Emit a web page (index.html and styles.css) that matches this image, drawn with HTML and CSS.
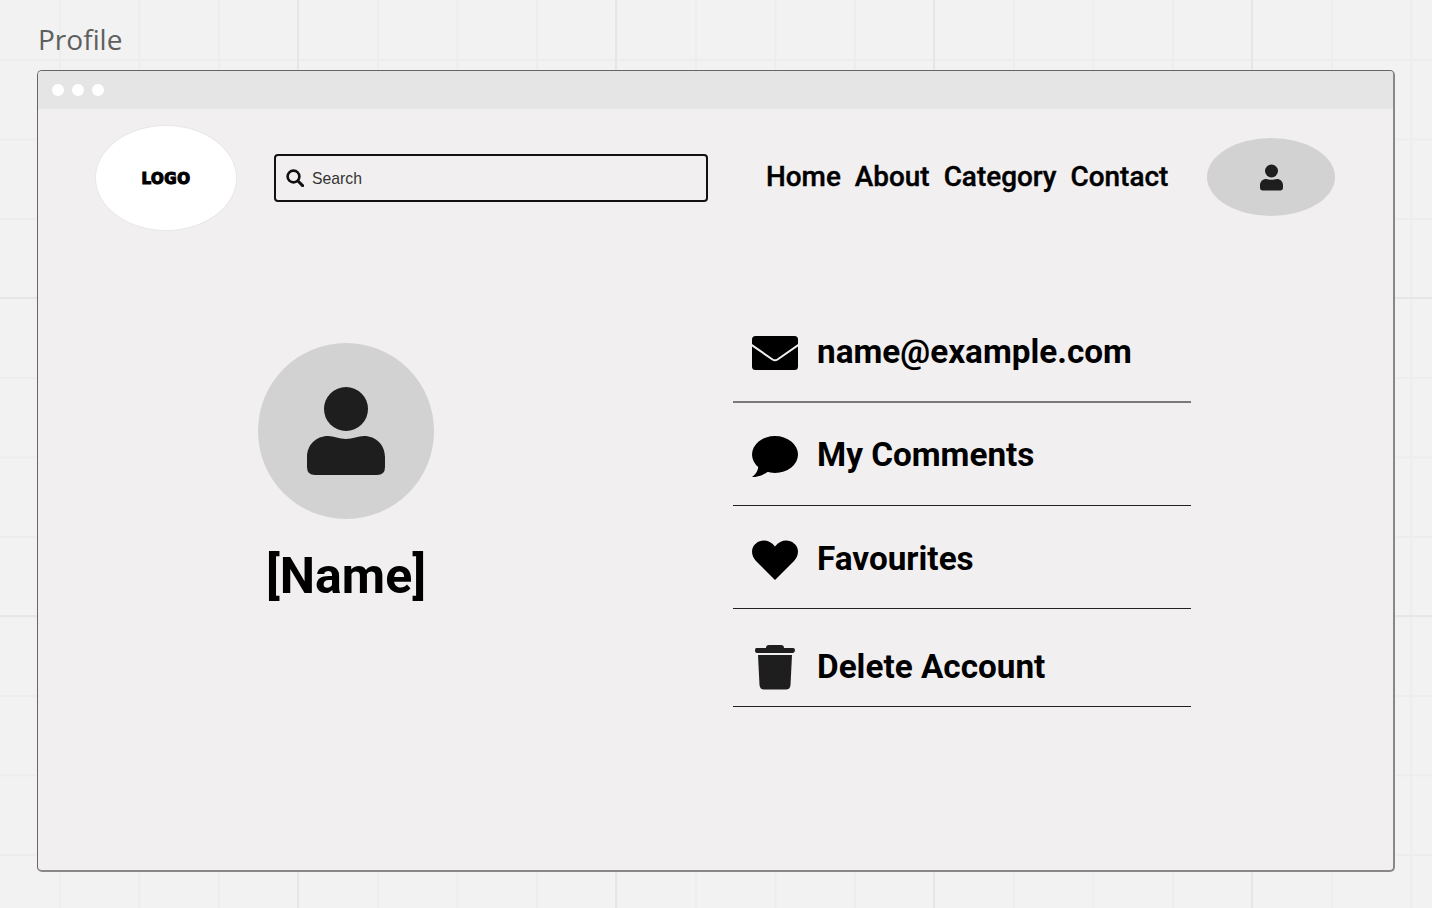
FILE: index.html
```html
<!DOCTYPE html>
<html lang="en">
<head>
  <meta charset="UTF-8" />
  <meta name="viewport" content="width=device-width, initial-scale=1.0"/>
  <title>Profile</title>
  <link rel="stylesheet" href="styles.css">
</head>
<body>
  <h1 class="frame-title">Profile</h1>

  <div class="window">
    <div class="titlebar">
      <span class="dot"></span>
      <span class="dot"></span>
      <span class="dot"></span>
    </div>

    <header class="site-header">
      <div class="logo">LOGO</div>

      <div class="search">
        <svg class="search-icon" viewBox="0 0 18 18" width="18" height="18">
          <circle cx="7.5" cy="7.5" r="5.9" fill="none" stroke="#111" stroke-width="2.6"/>
          <path d="M12 12l4.600 4.600" fill="none" stroke="#111" stroke-width="3" stroke-linecap="round"/>
        </svg>
        <span class="search-text">Search</span>
      </div>

      <nav class="nav">
        <a href="#">Home</a>
        <a href="#">About</a>
        <a href="#">Category</a>
        <a href="#">Contact</a>
      </nav>

      <div class="user-btn">
        <svg viewBox="0 0 78 88" width="23" height="27">
          <circle cx="39" cy="22" r="22"/>
          <path d="M0 80V70C0 58 9 49 21 49C27 49 32 52 39 52C46 52 51 49 57 49C69 49 78 58 78 70V80Q78 88 70 88H8Q0 88 0 80Z"/>
        </svg>
      </div>
    </header>

    <main class="profile">
      <section class="profile-card">
        <div class="avatar">
          <svg viewBox="0 0 78 88" width="78" height="88">
            <circle cx="39" cy="22" r="22"/>
            <path d="M0 80V70C0 58 9 49 21 49C27 49 32 52 39 52C46 52 51 49 57 49C69 49 78 58 78 70V80Q78 88 70 88H8Q0 88 0 80Z"/>
          </svg>
        </div>
        <h2 class="profile-name">[Name]</h2>
      </section>

      <ul class="profile-list">
        <li class="row row-email">
          <svg class="row-icon" viewBox="0 0 46 34" width="46" height="34">
            <rect width="46" height="34" rx="3.500" fill="#000"/>
            <path d="M-1 8.500L20.500 23.500Q23 25 25.500 23.500L47 8.500" fill="none" stroke="#f1eff0" stroke-width="2"/>
          </svg>
          <span>name@example.com</span>
        </li>
        <li class="row">
          <svg class="row-icon" viewBox="0 0 46 41" width="46" height="41">
            <ellipse cx="23" cy="18.500" rx="23" ry="18.500" fill="#000"/>
            <path d="M6 28C7 34 4 38 0 41C6 41 12 39 17 35Z" fill="#000"/>
          </svg>
          <span>My Comments</span>
        </li>
        <li class="row row-favourites">
          <svg class="row-icon" viewBox="0 0 46 40" width="46" height="40">
            <path d="M23 40L4 21C-1.300 15.700-1.300 7 4 3.400C9.500-1 17.500-.5 23 6.500C28.500-.5 36.500-1 42 3.400C47.300 7 47.300 15.700 42 21Z" fill="#000"/>
          </svg>
          <span>Favourites</span>
        </li>
        <li class="row row-delete">
          <svg class="row-icon" viewBox="0 0 46 46" width="46" height="46">
            <path d="M14 4Q14 1 17 1H29Q32 1 32 4H41Q43 4 43 6.250T41 9H5Q3 9 3 6.250T5 4Z" fill="#1e1e1e"/>
            <path d="M6 11H40L38.500 41Q38 45.500 34 45.500H12Q8 45.500 7.500 41Z" fill="#1e1e1e"/>
          </svg>
          <span>Delete Account</span>
        </li>
      </ul>
    </main>
  </div>
</body>
</html>
```

FILE: styles.css
```css
* {
  box-sizing: border-box;
}

html, body {
  height: 100%;
}

body {
  margin: 0;
  padding: 0 37px;
  overflow: hidden;
  font-family: Roboto, Arial, sans-serif;
  background-color: #f2f2f2;
  background-image:
    linear-gradient(to right, #e6e6e6 2px, transparent 2px),
    linear-gradient(to bottom, #e6e6e6 2px, transparent 2px),
    linear-gradient(to right, #ededed 2px, transparent 2px),
    linear-gradient(to bottom, #ededed 2px, transparent 2px);
  background-size: 318px 318px, 318px 318px, 79.5px 79.5px, 79.5px 79.5px;
  background-position: 297px 0, 0 297px, 59px 0, 0 59px;
}

.frame-title {
  margin: 0;
  height: 70px;
  padding-top: 20px;
  padding-left: 1px;
  font-family: "Open Sans", sans-serif;
  font-size: 28px;
  font-weight: 400;
  line-height: 38px;
  color: #5f5f5f;
}

.window {
  width: 1358px;
  height: 802px;
  background: #f1eff0;
  border: 1px solid #666;
  border-right: 2px solid #888;
  border-bottom: 2px solid #888;
  border-radius: 5px;
  overflow: hidden;
}

.titlebar {
  height: 38px;
  background: #e5e5e5;
  display: flex;
  align-items: center;
  gap: 8px;
  padding-left: 13.5px;
  padding-bottom: 1px;
}

.dot {
  width: 12px;
  height: 12px;
  border-radius: 50%;
  background: #fff;
}

.site-header {
  display: flex;
  align-items: center;
  margin-top: 16px;
  padding-left: 57px;
}

.logo {
  width: 142px;
  height: 106px;
  padding-top: 2px;
  border-radius: 50%;
  background: #fff;
  border: 1.5px solid #e8e8e8;
  display: flex;
  align-items: center;
  justify-content: center;
  font-family: "DejaVu Sans", sans-serif;
  font-size: 15px;
  font-weight: 700;
  letter-spacing: 0.5px;
  color: #000;
  -webkit-text-stroke: 1.2px #000;
}

.search {
  width: 434px;
  height: 48px;
  margin-left: 37px;
  border: 2px solid #111;
  border-radius: 4px;
  display: flex;
  align-items: center;
  padding-left: 10px;
  font-family: "Liberation Sans", Arial, sans-serif;
  font-size: 15.75px;
  color: #333;
}

.search-icon {
  margin-right: 8px;
}

.search-text {
  padding-top: 1px;
}

.nav {
  display: flex;
  gap: 14px;
  margin-left: 58px;
  margin-bottom: 4px;
}

.nav a {
  color: #000;
  text-decoration: none;
  font-size: 27.9px;
  font-weight: 500;
  -webkit-text-stroke: 0.4px #000;
}

.user-btn {
  width: 128px;
  height: 78px;
  margin-left: 39px;
  margin-bottom: 2px;
  border-radius: 50%;
  background: #d2d2d2;
  display: flex;
  align-items: center;
  justify-content: center;
}

.user-btn svg,
.avatar svg {
  fill: #1e1e1e;
}

.profile {
  display: flex;
  margin-top: 70px;
  padding-left: 220px;
}

.profile-card {
  width: 176px;
  margin-top: 42px;
  display: flex;
  flex-direction: column;
  align-items: center;
}

.avatar {
  width: 176px;
  height: 176px;
  border-radius: 50%;
  background: #d2d2d2;
  display: flex;
  align-items: center;
  justify-content: center;
}

.profile-name {
  margin: 27px 0 0;
  font-size: 50px;
  font-weight: 700;
  line-height: 60px;
  color: #000;
  white-space: nowrap;
}

.profile-list {
  list-style: none;
  margin: 0 0 0 299px;
  padding: 0;
  width: 458px;
}

.row {
  height: 103px;
  display: flex;
  align-items: center;
  gap: 19px;
  padding-left: 19px;
  font-size: 33.3px;
  font-weight: 700;
  color: #000;
  border-bottom: 1px solid #222;
}

.row-icon {
  margin-top: 4px;
}

.row-email {
  height: 102px;
  border-bottom: 2px solid #7a7a7a;
}

.row-favourites {
  padding-top: 2px;
}

.row-delete {
  height: 98px;
  padding-top: 18px;
}

.row-delete .row-icon {
  margin-top: 0;
}
```
